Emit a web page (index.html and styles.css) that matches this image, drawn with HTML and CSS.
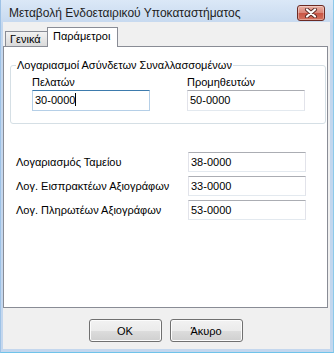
FILE: index.html
```html
<!DOCTYPE html>
<html lang="el">
<head>
    <meta charset="UTF-8">
    <title>Μεταβολή Ενδοεταιρικού Υποκαταστήματος</title>
    <link rel="stylesheet" href="styles.css">
</head>
<body>
    <div class="window">
        <div class="titlebar">
            <span class="title">Μεταβολή Ενδοεταιρικού Υποκαταστήματος</span>
            <button class="close" type="button" aria-label="Κλείσιμο">
                <svg width="14" height="10" viewBox="0 0 14 10">
                    <path d="M3 1.5 L11 8.5 M11 1.5 L3 8.5" stroke="#5a2a26" stroke-width="4" stroke-linecap="round"/>
                    <path d="M3 1.5 L11 8.5 M11 1.5 L3 8.5" stroke="#ffffff" stroke-width="2.2" stroke-linecap="round"/>
                </svg>
            </button>
        </div>

        <div class="client">
            <div class="tabs">
                <div class="tab">Γενικά</div>
                <div class="tab active">Παράμετροι</div>
            </div>

            <div class="panel">
                <fieldset class="group">
                    <legend>Λογαριασμοί Ασύνδετων Συναλλασσομένων</legend>
                    <div class="group-grid">
                        <label>Πελατών</label>
                        <label>Προμηθευτών</label>
                        <div class="field focused">30-0000<span class="caret"></span></div>
                        <div class="field">50-0000</div>
                    </div>
                </fieldset>

                <div class="rows">
                    <label>Λογαριασμός Ταμείου</label>
                    <div class="field">38-0000</div>
                    <label>Λογ. Εισπρακτέων Αξιογράφων</label>
                    <div class="field">33-0000</div>
                    <label>Λογ. Πληρωτέων Αξιογράφων</label>
                    <div class="field">53-0000</div>
                </div>
            </div>

            <div class="footer">
                <button class="btn" type="button">OK</button>
                <button class="btn" type="button">Άκυρο</button>
            </div>
        </div>
    </div>
</body>
</html>
```

FILE: styles.css
```css
body {
    margin: 0;
    font-family: "Liberation Sans", "DejaVu Sans", sans-serif;
    font-size: 11px;
    color: #000;
}
.window {
    width: 334px;
    height: 353px;
    box-sizing: border-box;
    display: flex;
    flex-direction: column;
    padding: 0 3px 3px 3px;
    background: linear-gradient(#dbe8f7, #c4d7ee 26px, #c4d7ee);
    border-left: 1px solid #9ec2e6;
    border-right: 1px solid #8cc9ea;
    border-bottom: 1px solid #6fc3ea;
}
.titlebar {
    height: 22px;
    flex: none;
    display: flex;
    justify-content: space-between;
    align-items: flex-start;
    margin-left: -3px;
    margin-right: -3px;
}
.title {
    margin: 6px 0 0 8px;
    font-size: 12px;
    line-height: 15px;
    color: #1e1e1e;
}
.close {
    width: 28px;
    height: 16px;
    margin: 5px 8px 0 0;
    padding: 0;
    border: 1px solid #6b2a24;
    border-radius: 3px;
    background: linear-gradient(#eab0a4, #d98477 50%, #c85545 51%, #d4725f);
    box-shadow: inset 0 0 0 1px rgba(255, 255, 255, 0.35);
    display: flex;
    align-items: center;
    justify-content: center;
}
.client {
    flex: 1;
    display: flex;
    flex-direction: column;
    background: #f0f0f0;
    padding: 4px 2px 0 0;
    margin-left: -1px;
}
.tabs {
    height: 20px;
    display: flex;
    align-items: flex-end;
    padding-left: 2px;
}
.tab {
    height: 14px;
    padding: 0 4px;
    line-height: 14px;
    border: 1px solid #898c95;
    border-bottom: none;
    background: linear-gradient(#f2f2f2, #e6e6e6 50%, #dadada);
    width: 33px;
}
.tab.active {
    height: 19px;
    width: 60px;
    line-height: 16px;
    margin-left: -1px;
    margin-bottom: -1px;
    padding: 0 4px 0 5px;
    background: #fff;
    position: relative;
}
.panel {
    height: 262px;
    box-sizing: border-box;
    flex: none;
    background: #fff;
    border: 1px solid #898c95;
    display: flex;
    flex-direction: column;
}
.group {
    margin: 12px 1px 0 6px;
    padding: 0 0 12px 0;
    border: 1px solid #d5dfe5;
    border-radius: 3px;
    min-width: 0;
}
.group legend {
    margin-left: 5px;
    padding: 0 1px;
    line-height: 13px;
}
.group-grid {
    display: grid;
    grid-template-columns: 118px 118px;
    column-gap: 37px;
    row-gap: 1px;
    margin: 4px 0 0 21px;
}
.group-grid label {
    line-height: 13px;
}
.field {
    height: 20px;
    box-sizing: border-box;
    padding-left: 2px;
    line-height: 18px;
    border: 1px solid #e2e3ea;
    border-top-color: #abadb3;
    border-bottom-color: #e3e9ef;
    background: #fff;
}
.group-grid .field {
    height: 21px;
    line-height: 19px;
}
.field.focused {
    border-color: #b5cfe7;
    border-top-color: #3d7bad;
}
.caret {
    display: inline-block;
    width: 1px;
    height: 13px;
    background: #000;
    vertical-align: -2px;
}
.rows {
    display: grid;
    grid-template-columns: 172px 118px;
    row-gap: 4px;
    align-items: center;
    margin: 28px 0 0 12px;
}
.footer {
    flex: 1;
    display: flex;
    justify-content: center;
    align-items: flex-start;
    gap: 8px;
    padding-top: 11px;
}
.btn {
    width: 73px;
    height: 23px;
    padding: 0;
    font-family: inherit;
    font-size: 11px;
    color: #000;
    border: 1px solid #707070;
    border-radius: 3px;
    background: linear-gradient(#f2f2f2, #ebebeb 50%, #dddddd 51%, #cfcfcf);
    box-shadow: inset 0 0 0 1px #fcfcfc;
}
```
